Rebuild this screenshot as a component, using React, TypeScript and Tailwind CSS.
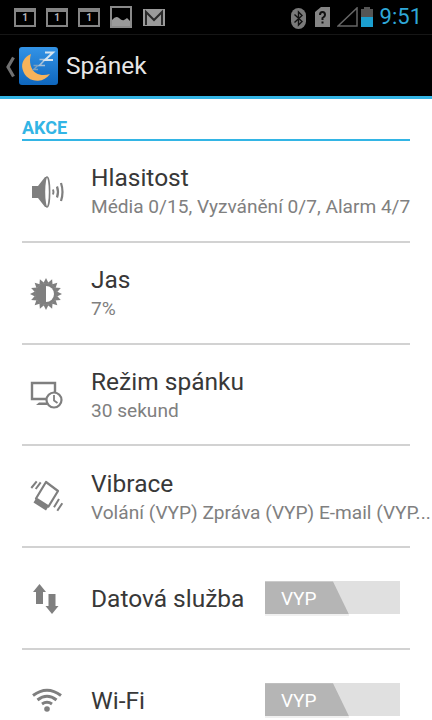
import React from 'react';

function NotifOne() {
  return (
    <div className="w-[22px] h-[19px] border-2 border-t-[4px] border-[#858585] flex items-center justify-center">
      <span className="text-[10px] leading-none font-bold text-[#b5b5b5]">1</span>
    </div>
  );
}

function StatusBar() {
  return (
    <div className="h-[35px] bg-black flex items-center pl-[14px] pr-[10px] border-b border-[#161616]">
      <div className="flex items-center gap-[10px]">
        <NotifOne />
        <NotifOne />
        <NotifOne />
        <svg width="22" height="22" viewBox="0 0 22 22">
          <rect x="1" y="1" width="20" height="20" fill="none" stroke="#8a8a8a" strokeWidth="2" />
          <path d="M2 20V14Q6 9 9 12T14 14T17 12L20 15V20Z" fill="#9a9a9a" />
        </svg>
        <svg width="22" height="17" viewBox="0 0 22 17" className="ml-[1px]">
          <rect x="0" y="0" width="22" height="17" fill="#9a9a9a" />
          <path d="M3 16V3L11 11L19 3V16" fill="none" stroke="#2a2a2a" strokeWidth="2" />
        </svg>
      </div>
      <div className="ml-auto flex items-center">
        <svg width="15" height="21" viewBox="0 0 15 21" className="mt-[2px]">
          <rect x="0" y="0" width="15" height="21" rx="7.5" fill="#7a7a7a" />
          <path d="M3.5 6.5L11 13.5L7.5 17V4L11 7.5L3.5 14.5" fill="none" stroke="#111" strokeWidth="1.4" />
        </svg>
        <svg width="15" height="20" viewBox="0 0 15 20" className="ml-[9px]">
          <path d="M0 5L6 0H15V20H0Z" fill="#858585" />
          <path d="M5 8Q5 5 7.5 5T10 8Q10 9.5 7.5 11V13" fill="none" stroke="#111" strokeWidth="2" />
          <rect x="6.5" y="14.5" width="2" height="2" fill="#111" />
        </svg>
        <svg width="21" height="20" viewBox="0 0 21 20" className="ml-[7px]">
          <path d="M1 19L20 1V19Z" fill="none" stroke="#666" strokeWidth="1.5" />
        </svg>
        <div className="ml-[3px] w-[12px] h-[20px] flex flex-col items-center">
          <div className="w-[6px] h-[2px] bg-[#555]" />
          <div className="w-[12px] h-[8px] bg-[#555]" />
          <div className="w-[12px] h-[10px] bg-[#1b9fd0]" />
        </div>
        <span className="ml-[7px] text-[22px] leading-none text-[#2fa8d8] font-['Roboto',sans-serif]">9:51</span>
      </div>
    </div>
  );
}

function ActionBar() {
  return (
    <div className="h-[61px] bg-black flex items-center">
      <svg width="11" height="22" viewBox="0 0 11 22" className="ml-[5px] mt-[2px]">
        <path d="M8.5 1.5L3 11L8.5 20.5" fill="none" stroke="#707070" strokeWidth="3.2" />
      </svg>
      <svg width="40" height="40" viewBox="0 0 40 40" className="ml-[3px] mt-[2px]">
        <defs>
          <linearGradient id="appBg" x1="0" y1="0" x2="0" y2="1">
            <stop offset="0" stopColor="#3393e6" />
            <stop offset="1" stopColor="#0e66bd" />
          </linearGradient>
        </defs>
        <rect x="0" y="0" width="39" height="38" rx="3" fill="url(#appBg)" />
        <path d="M12 7C5 10 2 16 3.5 22C5.5 30 12 34 19 33.8C24 33.6 28 31 31 27C26 28.5 21 28.5 17 26C12 23 9.5 15 12 7Z" fill="#f7b35a" />
        <path d="M14.5 18.5h4.5l-4.5 4h4.5" fill="none" stroke="#7ba0c0" strokeWidth="1.4" />
        <path d="M20.5 12.5h5.5l-5.5 6h5.5" fill="none" stroke="#a5c0d8" strokeWidth="1.6" />
        <path d="M26 5.5h8l-8 7.5h8" fill="none" stroke="#d5e4f0" strokeWidth="2" />
      </svg>
      <span className="ml-[7px] mt-[2px] text-[24.5px] leading-none text-[#e6e6e6] font-['Roboto',sans-serif]">Spánek</span>
    </div>
  );
}

const iconColor = '#7f7f7f';

function VolumeIcon() {
  return (
    <svg width="34" height="34" viewBox="0 0 34 34">
      <path d="M2 11H8L15 2H17V32H15L8 23H2Z" fill={iconColor} />
      <ellipse cx="17" cy="17" rx="2.6" ry="15" fill="#fff" stroke={iconColor} strokeWidth="1.6" />
      <path d="M23 14.5Q24 17 23 19.5" fill="none" stroke={iconColor} strokeWidth="2" />
      <path d="M27 11.5Q29 17 27 22.5" fill="none" stroke={iconColor} strokeWidth="2.2" />
      <path d="M31 8Q34 17 31 26" fill="none" stroke={iconColor} strokeWidth="2.2" />
    </svg>
  );
}

function BrightnessIcon() {
  const rays = Array.from({ length: 16 }, (_, i) => (i * 360) / 16);
  return (
    <svg width="32" height="32" viewBox="0 0 32 32">
      {rays.map((a) => (
        <path key={a} d="M13.2 5.5L16 0L18.8 5.5Z" fill={iconColor} transform={`rotate(${a} 16 16)`} />
      ))}
      <circle cx="16" cy="16" r="11" fill={iconColor} />
      <path d="M16 8A8 8 0 0 1 16 24Z" fill="#fff" />
    </svg>
  );
}

function SleepIcon() {
  return (
    <svg width="33" height="28" viewBox="0 0 33 28">
      <path d="M2 2H25V18H2Z" fill="none" stroke={iconColor} strokeWidth="2.4" />
      <path d="M6 24H17V21.5H9Z" fill={iconColor} />
      <circle cx="24" cy="19" r="7.5" fill="#fff" stroke={iconColor} strokeWidth="2.2" />
      <path d="M24 14V19.5L27.5 22" fill="none" stroke={iconColor} strokeWidth="1.8" />
    </svg>
  );
}

function VibrateIcon() {
  return (
    <svg width="34" height="34" viewBox="0 0 34 34">
      <path d="M16 2L28 11L18.5 26.5L6 18.5Z" fill="none" stroke={iconColor} strokeWidth="2.2" strokeLinejoin="round" />
      <path d="M6 18.5L18.5 26.5L16 30.5L3.5 22.5Z" fill={iconColor} />
      <path d="M10.7 2.3L5.7 9M6.7 1.3L1.3 8" fill="none" stroke={iconColor} strokeWidth="2" />
      <path d="M29 19L24 27.3M32.3 23.3L27.3 30.7" fill="none" stroke={iconColor} strokeWidth="2" />
    </svg>
  );
}

function DataIcon() {
  return (
    <svg width="26" height="30" viewBox="0 0 26 30" className="ml-[3px]">
      <path d="M6.5 0L13 8H10V20H3V8H0Z" fill={iconColor} />
      <path d="M19 30L25.5 22H22.5V10H15.5V22H12.5Z" fill={iconColor} />
    </svg>
  );
}

function WifiIcon() {
  return (
    <svg width="30" height="24" viewBox="0 0 30 24" className="ml-[2px] -mt-[1px]">
      <path d="M1 7.5Q15 -3 29 7.5" fill="none" stroke={iconColor} strokeWidth="3" />
      <path d="M5.5 12Q15 4.5 24.5 12" fill="none" stroke={iconColor} strokeWidth="3" />
      <path d="M10 16Q15 12.5 20 16" fill="none" stroke={iconColor} strokeWidth="3" />
      <circle cx="15" cy="21" r="2.8" fill={iconColor} />
    </svg>
  );
}

function Toggle() {
  return (
    <div className="relative ml-auto mr-[32px] -mt-[2px] w-[135px] h-[33px] bg-[#e0e0e0]">
      <div className="absolute inset-y-0 left-0 w-[84px] bg-[#b5b5b5] [clip-path:polygon(0_0,68px_0,84px_100%,0_100%)]" />
      <span className="absolute left-[16px] top-[8px] text-[19px] leading-[20px] text-white font-['Roboto',sans-serif]">VYP</span>
      <div className="absolute left-0 top-[33px] w-[84px] h-[2px] bg-[#f0f0f0]" />
    </div>
  );
}

interface RowProps {
  icon: React.ReactNode;
  title: string;
  subtitle?: string;
  toggle?: boolean;
}

function Row({ icon, title, subtitle, toggle }: RowProps) {
  return (
    <div className="relative flex items-center h-[101.75px]">
      <div className="w-[91px] pl-[30px] shrink-0 flex items-center">
        {icon}
      </div>
      {toggle ? (
        <>
          <span className="text-[24.5px] leading-[30px] text-[#383838] whitespace-nowrap">{title}</span>
          <Toggle />
        </>
      ) : (
        <div className="min-w-0 flex-1 -mt-[1px]">
          <div className="text-[24.5px] leading-[30px] text-[#383838] whitespace-nowrap">{title}</div>
          <div className="mt-[2px] text-[19.1px] leading-[24px] text-[#808080] whitespace-nowrap">{subtitle}</div>
        </div>
      )}
    </div>
  );
}

export default function App() {
  const rows: RowProps[] = [
    { icon: <VolumeIcon />, title: 'Hlasitost', subtitle: 'Média 0/15, Vyzvánění 0/7, Alarm 4/7' },
    { icon: <BrightnessIcon />, title: 'Jas', subtitle: '7%' },
    { icon: <SleepIcon />, title: 'Režim spánku', subtitle: '30 sekund' },
    { icon: <VibrateIcon />, title: 'Vibrace', subtitle: 'Volání (VYP) Zpráva (VYP) E-mail (VYP...' },
    { icon: <DataIcon />, title: 'Datová služba', toggle: true },
    { icon: <WifiIcon />, title: 'Wi-Fi', toggle: true },
  ];
  return (
    <div className="w-[432px] h-[720px] overflow-hidden bg-white font-['Roboto',sans-serif]">
      <StatusBar />
      <ActionBar />
      <div className="h-[3px] bg-[#33b5e5]" />
      <div className="mx-[22px] h-[42px] border-b-2 border-[#33b5e5] flex items-end">
        <span className="text-[18px] leading-[22px] font-bold text-[#33b5e5]">AKCE</span>
      </div>
      <div className="flex flex-col">
        {rows.map((row, i) => (
          <React.Fragment key={row.title}>
            {i > 0 && <div className="mx-[22px] h-[2px] -mt-[2px] bg-[#d2d2d2] z-10" />}
            <Row {...row} />
          </React.Fragment>
        ))}
      </div>
    </div>
  );
}
